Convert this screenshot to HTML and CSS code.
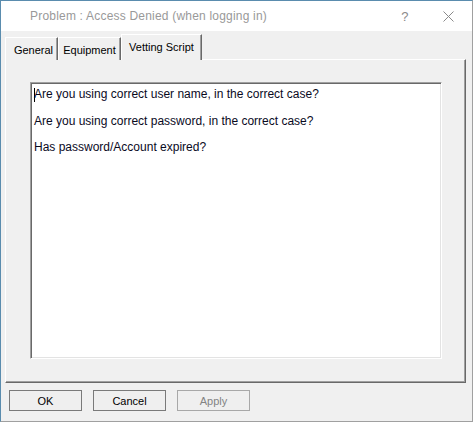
FILE: index.html
```html
<!DOCTYPE html>
<html lang="en">
<head>
    <meta charset="UTF-8">
    <title>Problem : Access Denied (when logging in)</title>
    <link rel="stylesheet" href="styles.css">
</head>
<body>
    <div class="window">
        <div class="titlebar">
            <span class="title">Problem : Access Denied (when logging in)</span>
            <span class="help">?</span>
            <span class="close">
                <svg width="11" height="11" viewBox="0 0 11 11">
                    <path d="M0.5 0.5 L10.5 10.5 M10.5 0.5 L0.5 10.5" stroke="#8a8a8a" stroke-width="1" fill="none"/>
                </svg>
            </span>
        </div>
        <div class="client">
            <div class="tabs">
                <div class="tab tab-general">General</div>
                <div class="tab tab-equipment">Equipment</div>
                <div class="tab tab-vetting active">Vetting Script</div>
            </div>
            <div class="panel">
                <div class="script-box">
                    <p><span class="caret"></span>Are you using correct user name, in the correct case?</p>
                    <p>&nbsp;</p>
                    <p>Are you using correct password, in the correct case?</p>
                    <p>&nbsp;</p>
                    <p>Has password/Account expired?</p>
                </div>
            </div>
            <div class="buttons">
                <button class="btn">OK</button>
                <button class="btn">Cancel</button>
                <button class="btn disabled">Apply</button>
            </div>
        </div>
    </div>
</body>
</html>
```

FILE: styles.css
```css
body {
    margin: 0;
    font-family: "Liberation Sans", Arial, sans-serif;
    font-size: 11px;
    color: #000;
}
.window {
    width: 473px;
    height: 422px;
    box-sizing: border-box;
    border: 1px solid #a0a0a0;
    border-top-color: #5a8cae;
    border-left-color: #5a8cae;
    background-color: #f0f0f0;
    display: flex;
    flex-direction: column;
}
.titlebar {
    height: 30px;
    flex-shrink: 0;
    background-color: #fff;
    display: flex;
    align-items: center;
    padding-left: 29px;
    color: #999;
    font-size: 12px;
    letter-spacing: 0.2px;
}
.title {
    flex: 1;
}
.help {
    width: 40px;
    text-align: center;
    color: #8a8a8a;
    font-size: 13px;
}
.close {
    width: 47px;
    display: flex;
    justify-content: center;
}
.client {
    padding: 4px 0 0 4px;
}
.tabs {
    display: flex;
    align-items: flex-end;
    height: 25px;
    position: relative;
    z-index: 1;
    margin-bottom: -1px;
}
.tab {
    height: 23px;
    box-sizing: border-box;
    display: flex;
    align-items: center;
    justify-content: center;
    background-color: #f0f0f0;
    border-top: 1px solid #fff;
    border-left: 1px solid #fff;
    border-right: 1px solid #696969;
    box-shadow: inset -1px 0 0 #a0a0a0;
    padding-top: 1px;
}
.tab-general {
    width: 53px;
    padding-left: 4px;
}
.tab-equipment {
    width: 63px;
}
.tab-vetting {
    width: 81px;
}
.tab.active {
    height: 26px;
    padding-bottom: 2px;
}
.panel {
    width: 461px;
    height: 324px;
    box-sizing: border-box;
    border-top: 1px solid #fff;
    border-left: 1px solid #fff;
    border-right: 1px solid #696969;
    border-bottom: 1px solid #696969;
    box-shadow: inset -1px -1px 0 #a0a0a0;
    padding: 22px 0 0 24px;
}
.script-box {
    width: 412px;
    height: 277px;
    box-sizing: border-box;
    background-color: #fff;
    border-top: 1px solid #a0a0a0;
    border-left: 1px solid #a0a0a0;
    border-right: 1px solid #fff;
    border-bottom: 1px solid #fff;
    box-shadow: inset 1px 1px 0 #696969, inset -1px -1px 0 #e3e3e3;
    padding: 5px 3px;
    color: #0a0a1e;
    font-size: 12px;
    line-height: 13px;
}
.script-box p {
    margin: 0;
}
.caret {
    display: inline-block;
    width: 0;
    height: 14px;
    border-left: 1px solid #000;
    margin-right: -1px;
    vertical-align: top;
}
.buttons {
    display: flex;
    gap: 11px;
    margin: 7px 0 0 4px;
}
.btn {
    width: 73px;
    height: 21px;
    box-sizing: border-box;
    border: 1px solid #7a7a7a;
    background-color: #efefef;
    font-family: "Liberation Sans", Arial, sans-serif;
    font-size: 11px;
    color: #000;
    padding: 0;
}
.btn.disabled {
    color: #838383;
    border-color: #a8a8a8;
}
```
